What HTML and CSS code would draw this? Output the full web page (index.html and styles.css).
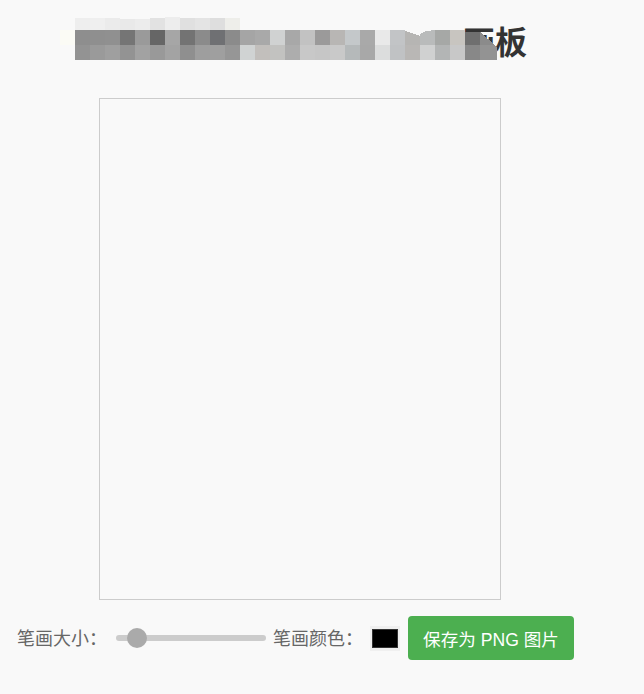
FILE: index.html
```html
<!DOCTYPE html>
<html lang="zh-CN">
<head>
    <meta charset="UTF-8">
    <meta name="viewport" content="width=device-width, initial-scale=1.0">
    <title>画板</title>
    <link rel="stylesheet" href="styles.css">
</head>
<body>
    <div class="board">
        <h1 class="board-title">画板</h1>

        <!-- Pixelated part of the title -->
        <svg class="mosaic" width="460" height="50" viewBox="60 15 460 50" shape-rendering="crispEdges" aria-hidden="true">
            <rect x="60" y="30" width="15" height="15" fill="#fbfbf5"/>

            <rect x="75" y="18" width="15" height="12" fill="#eeeeee"/>
            <rect x="90" y="18" width="15" height="12" fill="#efefef"/>
            <rect x="105" y="18" width="15" height="12" fill="#ebebeb"/>
            <rect x="120" y="19" width="15" height="11" fill="#e9e9e9"/>
            <rect x="135" y="19" width="15" height="11" fill="#ececec"/>
            <rect x="150" y="18" width="15" height="12" fill="#e2e2e2"/>
            <rect x="165" y="17" width="15" height="13" fill="#ededed"/>
            <rect x="180" y="18" width="15" height="12" fill="#e0e0e0"/>
            <rect x="195" y="18" width="15" height="12" fill="#e4e4e4"/>
            <rect x="210" y="18" width="15" height="12" fill="#dedede"/>
            <rect x="225" y="18" width="15" height="12" fill="#eeeeea"/>

            <rect x="75" y="30" width="15" height="15" fill="#8e8e8e"/>
            <rect x="90" y="30" width="15" height="15" fill="#8f8f8f"/>
            <rect x="105" y="30" width="15" height="15" fill="#909090"/>
            <rect x="120" y="30" width="15" height="15" fill="#757575"/>
            <rect x="135" y="30" width="15" height="15" fill="#9a9a9a"/>
            <rect x="150" y="30" width="15" height="15" fill="#666666"/>
            <rect x="165" y="30" width="15" height="15" fill="#a6a6a6"/>
            <rect x="180" y="30" width="15" height="15" fill="#737373"/>
            <rect x="195" y="30" width="15" height="15" fill="#8b8b8b"/>
            <rect x="210" y="30" width="15" height="15" fill="#6f7073"/>
            <rect x="225" y="30" width="15" height="15" fill="#8b8b8b"/>
            <rect x="240" y="30" width="15" height="15" fill="#a5a5a5"/>
            <rect x="255" y="30" width="15" height="15" fill="#a9a9a9"/>
            <rect x="270" y="30" width="15" height="15" fill="#d0d2d2"/>
            <rect x="285" y="30" width="15" height="15" fill="#a8a8a8"/>
            <rect x="300" y="30" width="15" height="15" fill="#c2c2c2"/>
            <rect x="315" y="30" width="15" height="15" fill="#9b9a9a"/>
            <rect x="330" y="30" width="15" height="15" fill="#b8b6b4"/>
            <rect x="345" y="30" width="15" height="15" fill="#c4c8ca"/>
            <rect x="360" y="30" width="15" height="15" fill="#a9a9a9"/>
            <rect x="375" y="30" width="15" height="15" fill="#e9e9e9"/>
            <rect x="390" y="30" width="15" height="15" fill="#c2c4c6"/>
            <polygon points="405,31 420,36 420,45 405,45" fill="#b6b5b3"/>
            <polygon points="420,34 426,31 435,30 435,45 420,45" fill="#b9bbbb"/>
            <rect x="435" y="30" width="15" height="15" fill="#a6a8a6"/>
            <rect x="450" y="30" width="15" height="15" fill="#c8c5c0"/>
            <rect x="465" y="32" width="15" height="13" fill="#6f6f6f"/>
            <polygon points="480,32 495,45 480,45" fill="#8b8b8b"/>

            <rect x="75" y="45" width="15" height="15" fill="#939393"/>
            <rect x="90" y="45" width="15" height="15" fill="#9a9a9a"/>
            <rect x="105" y="45" width="15" height="15" fill="#9f9f9f"/>
            <rect x="120" y="45" width="15" height="15" fill="#939393"/>
            <rect x="135" y="45" width="15" height="15" fill="#a2a2a2"/>
            <rect x="150" y="45" width="15" height="15" fill="#999999"/>
            <rect x="165" y="45" width="15" height="15" fill="#a3a3a3"/>
            <rect x="180" y="45" width="15" height="15" fill="#8f8f8f"/>
            <rect x="195" y="45" width="15" height="15" fill="#9e9e9e"/>
            <rect x="210" y="45" width="15" height="15" fill="#9f9f9f"/>
            <rect x="225" y="45" width="15" height="15" fill="#969696"/>
            <rect x="240" y="45" width="15" height="15" fill="#d0d3d3"/>
            <rect x="255" y="45" width="15" height="15" fill="#c2bfbc"/>
            <rect x="270" y="45" width="15" height="15" fill="#c2c2c0"/>
            <rect x="285" y="45" width="15" height="15" fill="#adadad"/>
            <rect x="300" y="45" width="15" height="15" fill="#c8c8c8"/>
            <rect x="315" y="45" width="15" height="15" fill="#c6c6c6"/>
            <rect x="330" y="45" width="15" height="15" fill="#c9c9c9"/>
            <rect x="345" y="45" width="15" height="15" fill="#b5b9ba"/>
            <rect x="360" y="45" width="15" height="15" fill="#a8a8a8"/>
            <rect x="375" y="45" width="15" height="15" fill="#dcdddd"/>
            <rect x="390" y="45" width="15" height="15" fill="#c0c2c4"/>
            <rect x="405" y="45" width="15" height="15" fill="#b9b7b5"/>
            <rect x="420" y="45" width="15" height="15" fill="#d0d1d1"/>
            <rect x="435" y="45" width="15" height="15" fill="#b3b5b5"/>
            <rect x="450" y="45" width="15" height="15" fill="#c8c8c8"/>
            <rect x="465" y="45" width="15" height="15" fill="#888888"/>
            <polygon points="480,45 495,45 497,48 497,60 480,60" fill="#939393"/>
        </svg>

        <canvas class="draw-area" width="400" height="500"></canvas>

        <div class="controls">
            <label class="control-label" for="brushSize">笔画大小：</label>
            <input class="size-slider" id="brushSize" type="range" min="1" max="50" value="5">
            <label class="control-label color-label" for="brushColor">笔画颜色：</label>
            <input class="color-picker" id="brushColor" type="color" value="#000000">
            <button class="save-btn" type="button">保存为 PNG 图片</button>
        </div>
    </div>
</body>
</html>
```

FILE: styles.css
```css
* {
    margin: 0;
    padding: 0;
    box-sizing: border-box;
    font-family: 'Liberation Sans', 'Noto Sans CJK SC', sans-serif;
}

body {
    background-color: #f9f9f9;
    color: #666;
}

.board {
    position: relative;
    width: 600px;
}

/* Title */
.board-title {
    padding: 21px 73px 0 0;
    height: 98px;
    font-size: 32px;
    line-height: 44px;
    font-weight: 700;
    color: #333;
    text-align: right;
}

.mosaic {
    position: absolute;
    top: 15px;
    left: 60px;
}

/* Canvas */
.draw-area {
    display: block;
    width: 402px;
    height: 502px;
    margin: 0 auto;
    border: 1px solid #ccc;
}

/* Controls */
.controls {
    display: flex;
    align-items: center;
    width: 644px;
    margin-top: 16px;
    padding-left: 17px;
}

.control-label {
    font-size: 18px;
    line-height: 42px;
    padding-top: 2px;
    width: 99px;
    flex-shrink: 0;
}

.color-label {
    margin-left: 7px;
    width: 97px;
}

.size-slider {
    appearance: none;
    -webkit-appearance: none;
    width: 150px;
    height: 6px;
    border-radius: 3px;
    background-color: #ccc;
    outline: none;
}

.size-slider::-webkit-slider-thumb {
    -webkit-appearance: none;
    width: 20px;
    height: 20px;
    border-radius: 50%;
    background-color: #aaa;
    cursor: pointer;
}

.color-picker {
    appearance: none;
    -webkit-appearance: none;
    width: 30px;
    height: 25px;
    padding: 3px 2px;
    border: none;
    background-color: #f0f0f0;
    cursor: pointer;
}

.color-picker::-webkit-color-swatch-wrapper {
    padding: 0;
}

.color-picker::-webkit-color-swatch {
    border: 1px solid #333;
    border-radius: 0;
}

.save-btn {
    width: 166px;
    height: 44px;
    margin-left: 8px;
    border: none;
    border-radius: 4px;
    background-color: #4caf50;
    color: #fff;
    font-size: 17.6px;
    cursor: pointer;
}
```
